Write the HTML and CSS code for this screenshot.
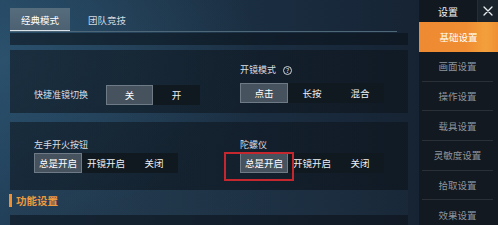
FILE: index.html
```html
<!DOCTYPE html>
<html lang="zh-CN">
<head>
<meta charset="utf-8">
<title>设置</title>
<link rel="stylesheet" href="styles.css">
</head>
<body>
<div class="app">
  <main class="main">
    <nav class="tabs">
      <div class="tab active">经典模式</div>
      <div class="tab">团队竞技</div>
    </nav>
    <div class="band"></div>

    <section class="panel p1">
      <div class="col inline">
        <span class="label wide">快捷准镜切换</span>
        <div class="seg two">
          <button class="btn on">关</button><button class="btn">开</button>
        </div>
      </div>
      <div class="col">
        <span class="label">开镜模式 <span class="help">?</span></span>
        <div class="seg">
          <button class="btn on">点击</button><button class="btn">长按</button><button class="btn">混合</button>
        </div>
      </div>
    </section>

    <section class="panel p2">
      <div class="col">
        <span class="label">左手开火按钮</span>
        <div class="seg">
          <button class="btn on">总是开启</button><button class="btn">开镜开启</button><button class="btn">关闭</button>
        </div>
      </div>
      <div class="col">
        <span class="label">陀螺仪</span>
        <div class="seg">
          <span class="mark"></span>
          <button class="btn on">总是开启</button><button class="btn">开镜开启</button><button class="btn">关闭</button>
        </div>
      </div>
    </section>

    <h3 class="section-title"><span class="bar"></span>功能设置</h3>
    <section class="panel p3"></section>
  </main>

  <aside class="side">
    <header class="side-head">
      <span class="side-title">设置</span>
      <span class="close">
        <svg width="10" height="10" viewBox="0 0 10 10"><path d="M1 1 L9 9 M9 1 L1 9" stroke="#e8ecef" stroke-width="1.3" fill="none" stroke-linecap="round"/></svg>
      </span>
    </header>
    <ul class="menu">
      <li class="item active">基础设置</li>
      <li class="item">画面设置</li>
      <li class="item">操作设置</li>
      <li class="item">载具设置</li>
      <li class="item">灵敏度设置</li>
      <li class="item">拾取设置</li>
      <li class="item">效果设置</li>
    </ul>
  </aside>
</div>
</body>
</html>
```

FILE: styles.css
```css
* { box-sizing: border-box; }

body {
  margin: 0;
  width: 498px;
  height: 225px;
  overflow: hidden;
  font-family: "Noto Sans CJK SC", "Noto Sans", sans-serif;
  color: #e6eaee;
  background:
    radial-gradient(ellipse 260px 160px at 0px 60px, rgba(50, 95, 125, 0.55), rgba(50, 95, 125, 0) 100%),
    linear-gradient(90deg, #22405a 0%, #1d3347 35%, #18283a 70%, #141e2a 100%);
}

.app {
  display: flex;
  height: 225px;
}

.main {
  flex: 1;
  padding-left: 10px;
  display: flex;
  flex-direction: column;
}

/* Tabs */
.tabs {
  height: 32px;
  width: 387px;
  display: flex;
  align-items: flex-end;
  gap: 7px;
  border-bottom: 1px solid #4d6678;
}

.tab {
  width: 60px;
  height: 23px;
  display: flex;
  align-items: center;
  justify-content: center;
  font-size: 9.5px;
  color: #d3dbe1;
}

.tab.active {
  background: linear-gradient(180deg, #566d7d, #4b6172);
  color: #ffffff;
  box-shadow: inset 0 -1px 0 #d8e2e8;
}

.band {
  height: 12px;
  width: 398px;
  margin-top: 1px;
  background: rgba(10, 17, 24, 0.55);
}

/* Panels */
.panel {
  width: 398px;
  display: grid;
  grid-template-columns: 206px 1fr;
  padding-left: 24px;
  background: linear-gradient(90deg, rgba(16, 26, 36, 0.62), rgba(13, 20, 28, 0.62));
}

.p1 {
  margin-top: 5px;
  height: 63px;
  padding-top: 14px;
}

.p2 {
  margin-top: 9px;
  height: 68px;
  padding-top: 17px;
}

.p3 {
  flex: 1;
  background: rgba(13, 20, 28, 0.6);
}

.col {
  display: flex;
  flex-direction: column;
  align-items: flex-start;
}

.p1 .col {
  gap: 7px;
}

.p2 .col {
  gap: 2px;
}

.col.inline {
  flex-direction: row;
  align-items: center;
  align-self: end;
  margin-bottom: 8px;
}

.label {
  font-size: 9px;
  line-height: 12px;
  color: #d8dee3;
  display: flex;
  align-items: center;
}

.label.wide {
  width: 65px;
}

.help {
  display: inline-flex;
  align-items: center;
  justify-content: center;
  width: 9px;
  height: 9px;
  margin-left: 7px;
  border: 1px solid #cfd6dc;
  border-radius: 50%;
  font-size: 6.5px;
  line-height: 1;
  color: #dfe5ea;
}

/* Segmented controls */
.seg {
  position: relative;
  display: flex;
  height: 20px;
  background: #111920;
}

.btn {
  width: 48px;
  height: 20px;
  padding: 0;
  border: none;
  background: transparent;
  font-family: inherit;
  font-size: 9.5px;
  color: #eef1f4;
  display: flex;
  align-items: center;
  justify-content: center;
}

.seg.two .btn {
  width: 47px;
}

.btn.on {
  background: #46525e;
  border: 1px solid #6e7a86;
  color: #ffffff;
}

.mark {
  position: absolute;
  left: -16px;
  top: -1px;
  width: 70px;
  height: 29px;
  border: 2px solid #c4272d;
  pointer-events: none;
}

/* Section title */
.section-title {
  margin: 0 0 0 -1px;
  height: 25px;
  width: 399px;
  padding-bottom: 4px;
  display: flex;
  align-items: center;
  gap: 4px;
  font-size: 10.5px;
  font-weight: 700;
  color: #ee983f;
  background: linear-gradient(90deg, rgba(40, 62, 80, 0.35), rgba(40, 62, 80, 0.15));
}

.bar {
  width: 3px;
  height: 13px;
  background: #f0902f;
}

/* Sidebar */
.side {
  width: 79px;
  background: #121920;
  display: flex;
  flex-direction: column;
}

.side-head {
  height: 22px;
  display: flex;
  align-items: center;
  background: #111820;
}

.side-title {
  flex: 1;
  text-align: center;
  font-size: 10px;
  color: #eef1f4;
}

.close {
  width: 21px;
  height: 22px;
  display: flex;
  align-items: center;
  justify-content: center;
  background: #1a222b;
  border-left: 1px solid #252e37;
}

.menu {
  list-style: none;
  margin: 0;
  padding: 0;
}

.item {
  height: 29.7px;
  margin: 0 5px 0 3px;
  display: flex;
  align-items: center;
  justify-content: center;
  font-size: 9.5px;
  color: #8e959d;
  border-bottom: 1px solid rgba(255, 255, 255, 0.1);
}

.item.active {
  margin: 0;
  height: 30px;
  border-bottom: none;
  color: #ffffff;
  background: linear-gradient(90deg, #ee8a31 0%, #f08d33 60%, #f3a03c 85%, #ef8f34 100%);
}
```
